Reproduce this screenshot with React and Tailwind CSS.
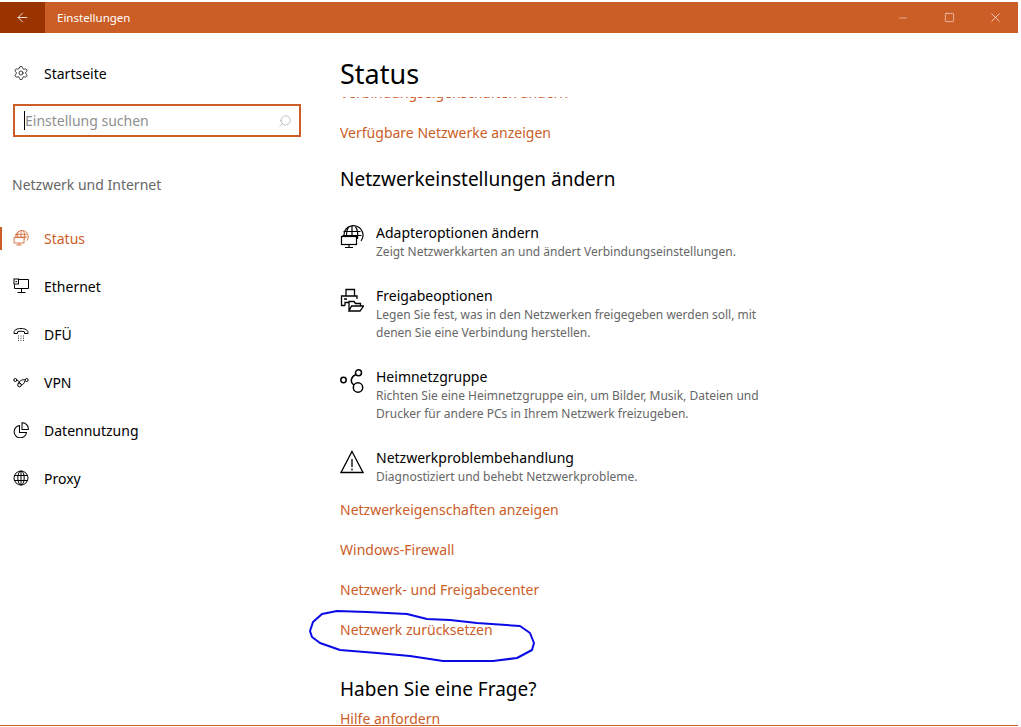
import React from 'react';
import { ArrowLeft, Settings, Search, Minus, Square, X } from 'lucide-react';

const font = "font-['Noto_Sans','Open_Sans',sans-serif]";

function NetIcon({ className }) {
    return (
        <svg viewBox="0 0 24 24" fill="none" stroke="currentColor" strokeWidth="1.2" className={className}>
            <path d="M4 10a9.5 9.5 0 1 1 17 6" />
            <path d="M12 1v11M8.500 1.800C7 4 6.500 7 6.500 10M15.500 1.800C18 5 18 10 17.500 14M3.500 6.500h17M2.500 10.500h19" />
            <rect x="1.500" y="11.500" width="15" height="8" fill="white" />
            <path d="M9 19.500v3M5 22.500h8" />
        </svg>
    );
}

function EthernetIcon({ className }) {
    return (
        <svg viewBox="0 0 16 16" fill="none" stroke="currentColor" strokeWidth="1" className={className}>
            <path d="M5.500 1.500h10v9h-14v-4" />
            <rect x="1" y="1" width="4.500" height="5" />
            <path d="M2.500 3.500h1.500M8.500 10.500v4M4.500 14.500h8" />
        </svg>
    );
}

function DialIcon({ className }) {
    return (
        <svg viewBox="0 0 16 16" fill="none" stroke="currentColor" strokeWidth="1" className={className}>
            <path d="M1 6.500C1 4 4 2.500 8 2.500s7 1.500 7 4v1h-3.500V5.800C10 5 6 5 4.500 5.800v1.700H1z" />
            <path d="M5 10h.8M7.600 10h.8M10.200 10h.8M5 12.200h.8M7.600 12.200h.8M10.200 12.200h.8M5 14.400h.8M7.600 14.400h.8M10.200 14.400h.8" />
        </svg>
    );
}

function VpnIcon({ className }) {
    return (
        <svg viewBox="0 0 16 16" fill="none" stroke="currentColor" strokeWidth="1" className={className}>
            <circle cx="2.300" cy="6" r="1.500" />
            <circle cx="13.700" cy="6" r="1.500" />
            <circle cx="6.500" cy="11" r="1.800" />
            <path d="M3.800 6c2 0 2.500 3.500 4 3.800M12.200 6C9.500 5 7 6.500 5 9.800M8 11c2 0 3.500-2 3.800-4" />
        </svg>
    );
}

function UsageIcon({ className }) {
    return (
        <svg viewBox="0 0 16 16" fill="none" stroke="currentColor" strokeWidth="1.050" className={className}>
            <path d="M6.500 3.500a6.200 6.200 0 1 0 7 7H6.500z" />
            <path d="M9 .8h.5A6 6 0 0 1 15.300 7.500H9z" />
        </svg>
    );
}

function GlobeIcon({ className }) {
    return (
        <svg viewBox="0 0 16 16" fill="none" stroke="currentColor" strokeWidth="1" className={className}>
            <circle cx="8" cy="8" r="7" />
            <ellipse cx="8" cy="8" rx="3.200" ry="7" />
            <path d="M8 1v14M1.500 5.500h13M1.500 10.500h13" />
        </svg>
    );
}

function ShareIcon({ className }) {
    return (
        <svg viewBox="0 0 24 24" fill="none" stroke="currentColor" strokeWidth="1.300" className={className}>
            <path d="M6 8V1.500h8.500V8" />
            <path d="M5 17.500H1.500V8h15.500v3" />
            <path d="M4 11h3M5 17.500v-3h4" />
            <path d="M9 23V13.500h5l1.500 2h5v2.500M9 23l2.500-5h12L20 23z" fill="white" />
        </svg>
    );
}

function HomeGroupIcon({ className }) {
    return (
        <svg viewBox="0 0 24 24" fill="none" stroke="currentColor" strokeWidth="1.500" className={className}>
            <circle cx="3.500" cy="11" r="2.700" />
            <circle cx="18.500" cy="3.800" r="3" />
            <circle cx="18" cy="18.500" r="4.700" />
            <path d="M16 5.500C11 7.500 9.500 13 14 16" />
        </svg>
    );
}

function WarningIcon({ className }) {
    return (
        <svg viewBox="0 0 24 24" fill="none" stroke="currentColor" strokeWidth="1.300" className={className}>
            <path d="M12 1.500 23 22.500H1z" />
            <path d="M12 9v8M12 18.500v2" />
        </svg>
    );
}

const navItems = [
    { label: 'Status', Icon: NetIcon, active: true },
    { label: 'Ethernet', Icon: EthernetIcon },
    { label: 'DFÜ', Icon: DialIcon },
    { label: 'VPN', Icon: VpnIcon },
    { label: 'Datennutzung', Icon: UsageIcon },
    { label: 'Proxy', Icon: GlobeIcon },
];

const options = [
    {
        title: 'Adapteroptionen ändern',
        text: ['Zeigt Netzwerkkarten an und ändert Verbindungseinstellungen.'],
        Icon: NetIcon,
        gap: 'mb-[25px]',
    },
    {
        title: 'Freigabeoptionen',
        text: ['Legen Sie fest, was in den Netzwerken freigegeben werden soll, mit', 'denen Sie eine Verbindung herstellen.'],
        Icon: ShareIcon,
        gap: 'mb-[25px]',
    },
    {
        title: 'Heimnetzgruppe',
        text: ['Richten Sie eine Heimnetzgruppe ein, um Bilder, Musik, Dateien und', 'Drucker für andere PCs in Ihrem Netzwerk freizugeben.'],
        Icon: HomeGroupIcon,
        gap: 'mb-[25px]',
    },
    {
        title: 'Netzwerkproblembehandlung',
        text: ['Diagnostiziert und behebt Netzwerkprobleme.'],
        Icon: WarningIcon,
        gap: 'mb-[14px]',
    },
];

const links = ['Netzwerkeigenschaften anzeigen', 'Windows-Firewall', 'Netzwerk- und Freigabecenter', 'Netzwerk zurücksetzen'];

function App() {
    return (
        <div className={`${font} relative h-[727px] w-[1021px] overflow-hidden bg-white pr-[3px] pt-[2px] text-black`}>
            {/* Title bar */}
            <div className="flex h-[31px] items-center bg-[#cb5d27] text-white">
                <div className="flex h-full w-[45px] items-center justify-center bg-[#993300]">
                    <ArrowLeft size={15} strokeWidth={1.3} />
                </div>
                <span className="ml-3 text-[11.500px]">Einstellungen</span>
                <div className="ml-auto flex items-center">
                    <div className="flex w-[46px] justify-center"><Minus size={12} strokeWidth={1} /></div>
                    <div className="flex w-[46px] justify-center"><Square size={11} strokeWidth={1.200} /></div>
                    <div className="flex w-[46px] justify-center"><X size={15} strokeWidth={1} /></div>
                </div>
            </div>

            <div className="flex h-[693px] border-b border-[#cb5d27]">
                {/* Sidebar */}
                <aside className="w-[340px] shrink-0">
                    <div className="mt-[28px] flex h-[24px] items-center pl-[13px]">
                        <Settings size={16} strokeWidth={1.100} />
                        <span className="ml-[15px] text-[14px]">Startseite</span>
                    </div>
                    <div className="ml-[13px] mt-[19px] flex h-[33px] w-[288px] items-center border-2 border-[#cb5d27] pl-[9px] pr-[7px]">
                        <div className="h-[19px] w-px bg-black" />
                        <span className="text-[14px] text-[#8f8f8f]">Einstellung suchen</span>
                        <Search size={14} strokeWidth={1} className="ml-auto -scale-x-100 text-[#999]" />
                    </div>
                    <p className="ml-3 mt-[37px] text-[14px] leading-[22px] text-[#666]">Netzwerk und Internet</p>
                    <nav className="mt-[18px]">
                        {navItems.map(({ label, Icon, active }) => (
                            <div key={label} className="relative flex h-[48px] items-center pl-[13px]">
                                {active && <div className="absolute left-0 top-[13px] h-[23px] w-[2px] bg-[#cb5d27]" />}
                                <Icon className={`h-4 w-4 ${active ? 'text-[#cb5d27]' : 'text-black'}`} />
                                <span className={`ml-[15px] text-[14px] ${active ? 'text-[#cb5d27]' : ''}`}>{label}</span>
                            </div>
                        ))}
                    </nav>
                </aside>

                {/* Main column */}
                <main className="flex min-w-0 flex-1 flex-col">
                    <h1 className="mt-[20px] text-[27px] leading-[42px]">Status</h1>
                    <div className="mt-[2px] flex-1 overflow-hidden">
                        <div className="-mt-[14px]">
                            <a className="block text-[14px] leading-[20px] text-[#cb5d27]">Verbindungseigenschaften ändern</a>
                            <a className="mt-[20px] block text-[14px] leading-[20px] text-[#cb5d27]">Verfügbare Netzwerke anzeigen</a>
                            <h2 className="mt-[22px] text-[19px] leading-[28px]">Netzwerkeinstellungen ändern</h2>
                            <div className="mt-[30px]">
                                {options.map(({ title, text, Icon, gap }) => (
                                    <div key={title} className={`flex ${gap}`}>
                                        <Icon className="mt-[2px] h-6 w-6 shrink-0" />
                                        <div className="ml-3">
                                            <div className="text-[14px] leading-[20px]">{title}</div>
                                            {text.map((line) => (
                                                <div key={line} className="text-[12px] leading-[18px] text-[#666]">{line}</div>
                                            ))}
                                        </div>
                                    </div>
                                ))}
                            </div>
                            <div className="flex flex-col gap-[20px]">
                                {links.map((link) => (
                                    <a key={link} className="block text-[14px] leading-[20px] text-[#cb5d27]">{link}</a>
                                ))}
                            </div>
                            <h2 className="mt-[35px] text-[19px] leading-[28px]">Haben Sie eine Frage?</h2>
                            <a className="mt-[6px] block text-[14px] leading-[20px] text-[#cb5d27]">Hilfe anfordern</a>
                        </div>
                    </div>
                </main>
            </div>

            {/* Pen annotation on top of the screenshot */}
            <svg className="pointer-events-none absolute left-[300px] top-[600px] h-[70px] w-[250px]" viewBox="0 0 250 70" fill="none">
                <path
                    d="M10 31 13 22 22 14 37 11 67 12 107 14 127 19 150 20 177 23 220 26 230 33 234 43 232 50 217 58 193 61 143 61 110 56 77 53 40 50 20 43 12 37Z"
                    stroke="#0a0ae6"
                    strokeWidth="2"
                    strokeLinejoin="round"
                />
            </svg>
        </div>
    );
}

export default App;
